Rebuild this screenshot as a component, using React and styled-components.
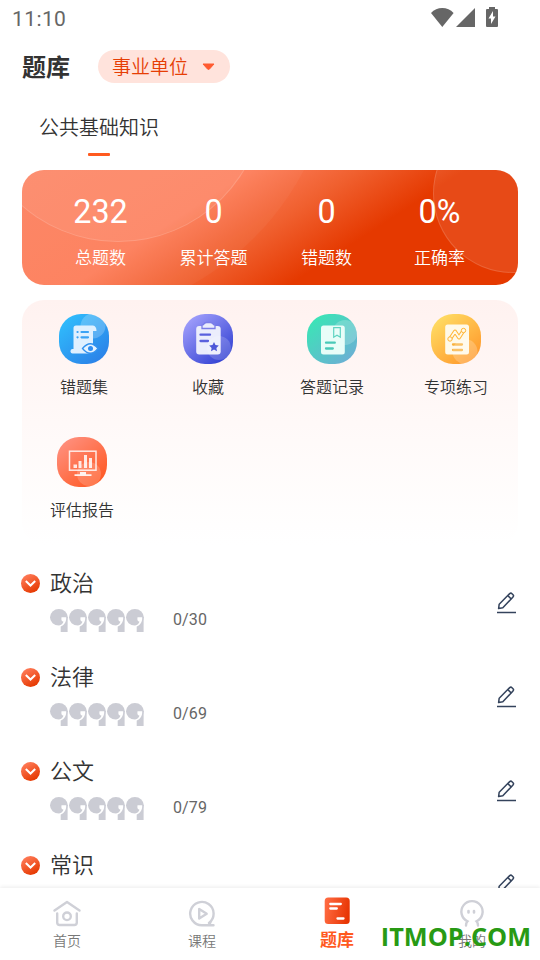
import React from 'react';
import styled, { createGlobalStyle } from 'styled-components';

const GlobalStyle = createGlobalStyle`
  * {
    box-sizing: border-box;
  }
  body {
    margin: 0;
    background: #fff;
    font-family: Roboto, 'Noto Sans CJK SC', sans-serif;
    color: #333;
  }
`;

const Screen = styled.div`
  position: relative;
  display: flex;
  flex-direction: column;
  width: 540px;
  height: 960px;
  overflow: hidden;
  background: #fff;
`;

const StatusBar = styled.div`
  display: flex;
  justify-content: space-between;
  height: 38px;
  padding: 7px 40px 0 12px;
  font-size: 21px;
  line-height: 24px;
  letter-spacing: 0.4px;
  color: #666;
`;

const Header = styled.div`
  display: flex;
  align-items: center;
  gap: 28px;
  height: 57px;
  padding-left: 22px;
`;

const PageTitle = styled.div`
  padding-top: 2px;
  font-size: 24px;
  font-weight: 700;
  line-height: 32px;
`;

const Picker = styled.div`
  display: flex;
  align-items: center;
  gap: 14px;
  width: 132px;
  height: 33px;
  padding-left: 14px;
  border-radius: 17px;
  background: #ffe3dc;
  color: #e63e05;
  font-size: 19px;
  font-weight: 350;
`;

const PickerText = styled.span`
  padding-top: 2px;
  line-height: 31px;
`;

const Tab = styled.div`
  display: flex;
  flex-direction: column;
  align-items: center;
  gap: 10px;
  width: 120px;
  height: 75px;
  margin-left: 39px;
  padding-top: 18px;
  font-size: 20px;
  font-weight: 350;
  line-height: 30px;
`;

const TabLine = styled.div`
  width: 22px;
  height: 3px;
  border-radius: 1px;
  background: #ff5a1f;
`;

const Summary = styled.div`
  position: relative;
  display: grid;
  grid-template-columns: repeat(4, 113px);
  flex: none;
  height: 115px;
  margin: 0 22px;
  padding: 22px 22px 0;
  border-radius: 22px;
  overflow: hidden;
  background: linear-gradient(147deg, #fc8361 0%, #fd7e5b 34%, #f0602f 50%, #e53900 66%);
`;

const Bubble = styled.div`
  position: absolute;
  left: ${(props) => props.$x - props.$r}px;
  top: ${(props) => props.$y - props.$r}px;
  width: ${(props) => props.$r * 2}px;
  height: ${(props) => props.$r * 2}px;
  border-radius: 50%;
  border: ${(props) => (props.$ring ? '1.5px solid rgba(255, 255, 255, 0.14)' : 'none')};
  background: rgba(255, 255, 255, ${(props) => props.$alpha});
`;

const Stat = styled.div`
  position: relative;
  display: flex;
  flex-direction: column;
  align-items: center;
  gap: 12px;
  color: #fff;
`;

const StatValue = styled.div`
  font-size: 32.3px;
  line-height: 40px;
`;

const StatLabel = styled.div`
  font-size: 17px;
  font-weight: 350;
  line-height: 28px;
`;

const Menu = styled.div`
  display: grid;
  grid-template-columns: repeat(4, 124px);
  grid-auto-rows: 123px;
  flex: none;
  height: 245px;
  margin: 15px 22px 0;
  padding-top: 14px;
  border-radius: 22px;
  background: linear-gradient(180deg, #fff2f0 0%, #fff9f8 50%, #fff 100%);
`;

const MenuItem = styled.div`
  display: flex;
  flex-direction: column;
  align-items: center;
  gap: 12px;
  padding-right: ${(props) => (props.$last ? '4px' : '0')};
  font-size: 16px;
  font-weight: 350;
  line-height: 24px;
`;

const MenuIcon = styled.div`
  width: 50px;
  height: 50px;
  border-radius: 22px;
  overflow: hidden;
  background: linear-gradient(140deg, ${(props) => props.$from} 10%, ${(props) => props.$to} 90%);

  svg {
    display: block;
  }
`;

const List = styled.div`
  flex: 1;
  min-height: 0;
  padding: 21px 23px 0 21px;
  overflow: hidden;
`;

const Row = styled.div`
  display: flex;
  height: 94px;
`;

const RowArrow = styled.div`
  display: flex;
  align-items: center;
  justify-content: center;
  width: 19px;
  height: 19px;
  margin: 8px 10px 0 0;
  border-radius: 50%;
  background: linear-gradient(150deg, #ff7c5a 10%, #e63a02 85%);
`;

const RowBody = styled.div`
  flex: 1;
  padding-top: 1px;
`;

const RowTitle = styled.div`
  font-size: 22px;
  font-weight: 350;
  line-height: 34px;
`;

const RowProgress = styled.div`
  display: flex;
  align-items: center;
  height: 24px;
  margin-top: 8px;
`;

const RowCount = styled.div`
  margin-left: 28px;
  padding-bottom: 2px;
  font-size: 16px;
  line-height: 20px;
  letter-spacing: 0.1px;
  color: #666;
`;

const EditButton = styled.div`
  margin-top: 25px;
`;

const NavBar = styled.div`
  position: relative;
  display: grid;
  grid-template-columns: repeat(4, 135px);
  flex: none;
  height: 72px;
  background: #fff;
  box-shadow: 0 -1px 4px rgba(0, 0, 0, 0.08);
`;

const NavItem = styled.div`
  display: flex;
  flex-direction: column;
  align-items: center;
  gap: ${(props) => (props.$active ? '5px' : '3px')};
  padding-top: ${(props) => (props.$active ? '8px' : '11px')};
  padding-right: 1px;
  font-size: ${(props) => (props.$active ? '17px' : '14px')};
  font-weight: ${(props) => (props.$active ? 700 : 350)};
  line-height: ${(props) => (props.$active ? '22px' : '20px')};
  color: ${(props) => (props.$active ? '#ff5a1f' : '#787878')};
`;

const Watermark = styled.div`
  position: absolute;
  right: 9px;
  bottom: 6px;
  font-family: 'Open Sans', 'Noto Sans', sans-serif;
  font-size: 25.3px;
  font-weight: 700;
  line-height: 36px;
  color: #289a14;
  white-space: nowrap;
`;

const StatusIcons = () => (
  <svg width="70" height="24" viewBox="430 7 70 24" fill="#666">
    <path d="M442.3 27 431 13c3-3.300 7-5 11.300-5s8.300 1.700 11.300 5z" />
    <path d="M475 8v19h-19z" />
    <path
      fillRule="evenodd"
      d="M489 7h6v2h2q1 0 1 1v16q0 1-1 1h-10q-1 0-1-1V10q0-1 1-1h2zM493 11l-4.500 7.500h2.500V24l4.500-7.500H493z"
    />
  </svg>
);

const WrongSetIcon = () => (
  <svg width="50" height="50" viewBox="0 0 50 50">
    <circle cx="34" cy="12" r="12.500" fill="#fff" opacity="0.22" />
    <path d="M17 11.500H34Q37.500 12 37.500 17H34V37H14.500V14Q14.500 11.500 17 11.500z" fill="#dff0ff" />
    <rect x="11.500" y="35" width="20" height="4.500" rx="2" fill="#dff0ff" />
    <g stroke="#3ba3f5" strokeWidth="2.200" strokeLinecap="round">
      <path d="M18.500 18h.1M22.500 18h6.500M18.500 23.300h.1M22.500 23.300h6.500" />
    </g>
    <path
      d="M23.500 34.500Q31.500 25 39 34.500Q31.500 44 23.500 34.500z"
      fill="#e5f3ff"
      stroke="#3292f0"
      strokeWidth="1.300"
    />
    <circle cx="31.500" cy="34.500" r="2.500" fill="#2f8df0" />
  </svg>
);

const FavoriteIcon = () => (
  <svg width="50" height="50" viewBox="0 0 50 50">
    <rect x="13.200" y="12" width="24.500" height="28.500" rx="3" fill="#ebedfc" />
    <path
      d="M19 14.500v-3q0-1 1.500-1 1-2 3-2h4q2 0 3 2 1.500 0 1.500 1v3z"
      fill="#ebedfc"
      stroke="#7b7de8"
      strokeWidth="1.300"
    />
    <path d="M17.500 20.700H27M17.500 27H25" stroke="#5a60dd" strokeWidth="2.300" strokeLinecap="round" />
    <circle cx="36" cy="34" r="12" fill="#fff" opacity="0.18" />
    <path
      d="M31 28l1.500 3 3.300.5-2.400 2.400.6 3.300-3-1.600-3 1.600.6-3.300-2.400-2.400 3.300-.5z"
      fill="#4d57d8"
    />
  </svg>
);

const RecordIcon = () => (
  <svg width="50" height="50" viewBox="0 0 50 50">
    <circle cx="38" cy="18.500" r="12.500" fill="#fff" opacity="0.2" />
    <rect x="14" y="11.500" width="23.800" height="29" rx="2.500" fill="#e8fdf8" />
    <path d="M26.700 13.700h6.600v9.500l-3.300-2-3.300 2z" fill="#e8fdf8" stroke="#5fd3c1" strokeWidth="1.200" />
    <path d="M19 28.700h8.800M19 34.500h6.800" stroke="#49c9b8" strokeWidth="2.300" strokeLinecap="round" />
  </svg>
);

const PracticeIcon = () => (
  <svg width="50" height="50" viewBox="0 0 50 50">
    <rect x="14.200" y="10.500" width="23.800" height="30" rx="2.500" fill="#fff9e8" />
    <g fill="none" strokeLinecap="round" strokeLinejoin="round">
      <path d="M19 25l5-7.500 4 6 4.500-7" stroke="#ffb638" strokeWidth="4" />
      <path d="M19 25l5-7.500 4 6 4.500-7" stroke="#fff9e8" strokeWidth="1.900" />
    </g>
    <g fill="#fff9e8" stroke="#ffb638">
      <circle cx="19" cy="25" r="2.200" />
      <circle cx="32.500" cy="16.500" r="2.200" />
    </g>
    <path d="M22 30.500h9M22 36h9" stroke="#f9b13c" strokeWidth="2.300" strokeLinecap="round" />
    <circle cx="34" cy="37.500" r="12.500" fill="#fff" opacity="0.22" />
  </svg>
);

const ReportIcon = () => (
  <svg width="50" height="50" viewBox="0 0 50 50">
    <rect x="12.500" y="14.200" width="26.500" height="19" fill="none" stroke="#ffeae5" strokeWidth="1.500" />
    <path d="M16.500 27.500h3.500v3.500h-3.500zM21.500 24h3v7h-3zM27 18h3v13h-3zM32 21h3v10h-3z" fill="#ffe9e3" />
    <path d="M23 35h6v2.300h5.500v1.700h-17v-1.700H23z" fill="#fff0ec" />
    <circle cx="32" cy="37" r="12" fill="#fff" opacity="0.18" />
  </svg>
);

const QuoteMark = () => (
  <svg width="19" height="24" viewBox="0 0 19 24">
    <ellipse cx="8.900" cy="8.300" rx="8.900" ry="8.300" fill="#cbccd4" />
    <path d="M17.600 8v15h-6.900v-7z" fill="#cbccd4" />
    <path d="M11.500 8.200h4.700c.3 4.800-2 8.300-6.400 9.600v-1.500c2.200-.7 3.300-1.900 3.600-3.800-1.500.1-2.400-1.300-1.900-4.300z" fill="#fff" />
  </svg>
);

const EditIcon = () => (
  <svg width="20" height="24" viewBox="0 0 20 24" fill="none" stroke="#34435c" strokeWidth="1.500">
    <path d="M1.600 17.600l.6-4.400L12.700 2.600q1.200-1 2.300.1l1 1q1.100 1.100 0 2.300L5.800 16.800z" strokeLinejoin="round" />
    <path d="M10.800 4.600l3.500 3.500" />
    <path d="M0 21.500h19" />
  </svg>
);

const HomeIcon = () => (
  <svg width="28" height="29" viewBox="0 0 28 29" fill="none" stroke="#cfd0d7" strokeWidth="2.400" strokeLinecap="round" strokeLinejoin="round">
    <path d="M1.500 11.500L14 3l12.500 8.500M4.200 14.500v9q0 2.500 2.500 2.500h14.600q2.500 0 2.500-2.500v-9" />
    <circle cx="14" cy="17.300" r="3.800" />
  </svg>
);

const CourseIcon = () => (
  <svg width="28" height="29" viewBox="0 0 28 29" fill="none" stroke="#cfd0d7" strokeWidth="2.400" strokeLinecap="round" strokeLinejoin="round">
    <path d="M25.500 26.300H14A11.700 11.700 0 1 1 21 23.900M20.500 26.300l2-3" />
    <path d="M11.200 10v9.500l7.500-4.700z" />
  </svg>
);

const BankIcon = () => (
  <svg width="26" height="28" viewBox="0 0 26 28">
    <defs>
      <linearGradient id="bank" x1="0" x2="1" y1="0.300" y2="0.500">
        <stop stopColor="#ff6b42" />
        <stop offset="1" stopColor="#e73402" />
      </linearGradient>
    </defs>
    <rect x="0.700" y="1.500" width="25" height="26.500" rx="3.500" fill="url(#bank)" />
    <path d="M6.300 8h10.500M6.300 12.500h6.500M13.500 22.500h6" stroke="#fff" strokeWidth="2.300" strokeLinecap="round" />
  </svg>
);

const MineIcon = () => (
  <svg width="28" height="29" viewBox="0 0 28 29" fill="none" stroke="#cfd0d7" strokeWidth="2.400" strokeLinecap="round">
    <path d="M8 26.500q0-2.500 1.500-4.200A10.600 10.600 0 1 1 18.500 22.300q1.500 1.700 1.500 4.200" />
    <path d="M10.500 12v1.500M16 12v1.500" strokeWidth="2.600" />
  </svg>
);

const stats = [
  { value: '232', label: '总题数' },
  { value: '0', label: '累计答题' },
  { value: '0', label: '错题数' },
  { value: '0%', label: '正确率' },
];

const menu = [
  { label: '错题集', from: '#30bcfc', to: '#2b81e8', Icon: WrongSetIcon },
  { label: '收藏', from: '#a09efb', to: '#3140d2', Icon: FavoriteIcon },
  { label: '答题记录', from: '#3be5b6', to: '#6bb0d4', Icon: RecordIcon },
  { label: '专项练习', from: '#ffdc63', to: '#ff982b', Icon: PracticeIcon },
  { label: '评估报告', from: '#ff8f7d', to: '#ff5924', Icon: ReportIcon },
];

const subjects = [
  { title: '政治', count: '0/30' },
  { title: '法律', count: '0/69' },
  { title: '公文', count: '0/79' },
  { title: '常识' },
];

const tabs = [
  { label: '首页', Icon: HomeIcon },
  { label: '课程', Icon: CourseIcon },
  { label: '题库', Icon: BankIcon, active: true },
  { label: '我的', Icon: MineIcon },
];

function App() {
  return (
    <>
      <GlobalStyle />
      <Screen>
        <StatusBar>
          <span>11:10</span>
          <StatusIcons />
        </StatusBar>
        <Header>
          <PageTitle>题库</PageTitle>
          <Picker>
            <PickerText>事业单位</PickerText>
            <svg width="13" height="8" viewBox="0 0 13 8">
              <path d="M1 1h11L7.500 6q-1 1-2 0z" fill="#ff5a30" stroke="#ff5a30" strokeLinejoin="round" />
            </svg>
          </Picker>
        </Header>
        <Tab>
          公共基础知识
          <TabLine />
        </Tab>
        <Summary>
          <Bubble $x={34} $y={-130} $r={280} $alpha={0.04} />
          <Bubble $x={96} $y={-75} $r={147} $alpha={0.07} $ring />
          <Bubble $x={490} $y={23} $r={79.5} $alpha={0.09} $ring />
          {stats.map((stat) => (
            <Stat key={stat.label}>
              <StatValue>{stat.value}</StatValue>
              <StatLabel>{stat.label}</StatLabel>
            </Stat>
          ))}
        </Summary>
        <Menu>
          {menu.map(({ label, from, to, Icon }, i) => (
            <MenuItem key={label} $last={i === menu.length - 1}>
              <MenuIcon $from={from} $to={to}>
                <Icon />
              </MenuIcon>
              {label}
            </MenuItem>
          ))}
        </Menu>
        <List>
          {subjects.map((subject) => (
            <Row key={subject.title}>
              <RowArrow>
                <svg width="13" height="9" viewBox="0 0 13 9">
                  <path d="M1.800 2l4.700 4.500L11.200 2" fill="none" stroke="#fff" strokeWidth="2" />
                </svg>
              </RowArrow>
              <RowBody>
                <RowTitle>{subject.title}</RowTitle>
                {subject.count && (
                  <RowProgress>
                    {[1, 2, 3, 4, 5].map((n) => (
                      <QuoteMark key={n} />
                    ))}
                    <RowCount>{subject.count}</RowCount>
                  </RowProgress>
                )}
              </RowBody>
              <EditButton>
                <EditIcon />
              </EditButton>
            </Row>
          ))}
        </List>
        <NavBar>
          {tabs.map(({ label, Icon, active }) => (
            <NavItem key={label} $active={active}>
              <Icon />
              {label}
            </NavItem>
          ))}
        </NavBar>
        <Watermark>ITMOP.COM</Watermark>
      </Screen>
    </>
  );
}

export default App;
